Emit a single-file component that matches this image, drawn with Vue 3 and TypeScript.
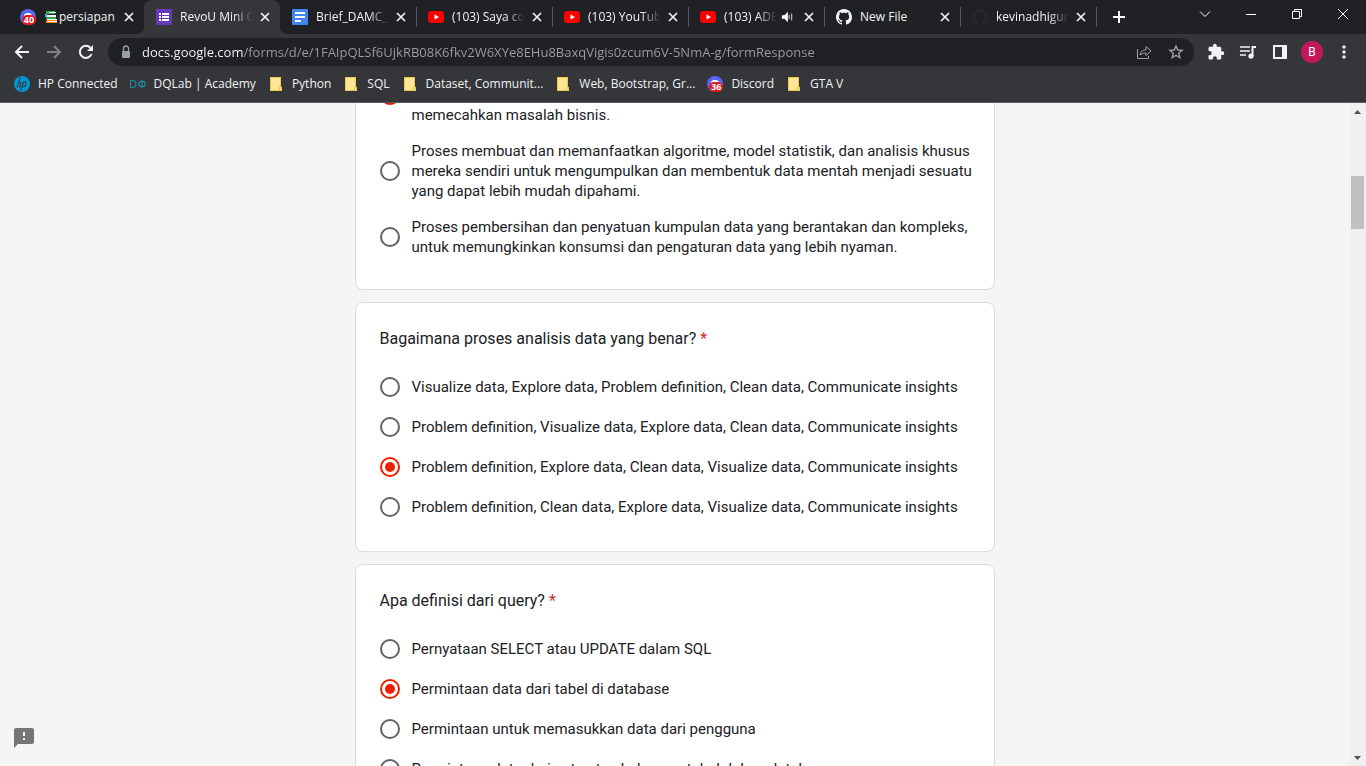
<script setup lang="ts">
import { ref } from 'vue'

type IconName = 'discord' | 'forms' | 'docs' | 'youtube' | 'github' | 'github-dark' | 'hp' | 'dqlab' | 'folder'

interface Tab { title: string; icon: IconName; active?: boolean; books?: boolean; audio?: boolean; fade?: boolean }
interface Bookmark { title: string; icon: IconName }
interface Question { id: string; title: string; options: string[]; answer: number }

const tabs: Tab[] = [
  { title: 'persiapan', icon: 'discord', books: true },
  { title: 'RevoU Mini C', icon: 'forms', active: true, fade: true },
  { title: 'Brief_DAMC_E', icon: 'docs', fade: true },
  { title: '(103) Saya co', icon: 'youtube', fade: true },
  { title: '(103) YouTub', icon: 'youtube', fade: true },
  { title: '(103) ADE', icon: 'youtube', audio: true, fade: true },
  { title: 'New File', icon: 'github' },
  { title: 'kevinadhigun', icon: 'github-dark', fade: true },
]

const bookmarks: Bookmark[] = [
  { title: 'HP Connected', icon: 'hp' },
  { title: 'DQLab | Academy', icon: 'dqlab' },
  { title: 'Python', icon: 'folder' },
  { title: 'SQL', icon: 'folder' },
  { title: 'Dataset, Communit...', icon: 'folder' },
  { title: 'Web, Bootstrap, Gr...', icon: 'folder' },
  { title: 'Discord', icon: 'discord' },
  { title: 'GTA V', icon: 'folder' },
]

const questions = ref<Question[]>([
  {
    id: 'wrangling',
    title: '',
    options: [
      'memecahkan masalah bisnis.',
      'Proses membuat dan memanfaatkan algoritme, model statistik, dan analisis khusus mereka sendiri untuk mengumpulkan dan membentuk data mentah menjadi sesuatu yang dapat lebih mudah dipahami.',
      'Proses pembersihan dan penyatuan kumpulan data yang berantakan dan kompleks, untuk memungkinkan konsumsi dan pengaturan data yang lebih nyaman.',
    ],
    answer: 0,
  },
  {
    id: 'proses',
    title: 'Bagaimana proses analisis data yang benar?',
    options: [
      'Visualize data, Explore data, Problem definition, Clean data, Communicate insights',
      'Problem definition, Visualize data, Explore data, Clean data, Communicate insights',
      'Problem definition, Explore data, Clean data, Visualize data, Communicate insights',
      'Problem definition, Clean data, Explore data, Visualize data, Communicate insights',
    ],
    answer: 2,
  },
  {
    id: 'query',
    title: 'Apa definisi dari query?',
    options: [
      'Pernyataan SELECT atau UPDATE dalam SQL',
      'Permintaan data dari tabel di database',
      'Permintaan untuk memasukkan data dari pengguna',
      'Permintaan data dari satu atau beberapa tabel dalam database',
    ],
    answer: 1,
  },
])

const address = ref('docs.google.com/forms/d/e/1FAIpQLSf6UjkRB08K6fkv2W6XYe8EHu8BaxqVigis0zcum6V-5NmA-g/formResponse')
</script>

<template>
  <div class="browser">
    <svg class="sprite" width="0" height="0" aria-hidden="true">
      <symbol id="i-discord" viewBox="0 0 16 16">
        <circle cx="8" cy="8" r="8" fill="#5865f2" />
        <path d="M4 7q0-3 4-3t4 3z" fill="#fff" />
      </symbol>
      <symbol id="i-forms" viewBox="0 0 16 16">
        <rect width="16" height="16" rx="1" fill="#673ab7" />
        <path d="M3 4h2v2H3zm3 0h7v2H6zM3 7h2v2H3zm3 0h7v2H6zm-3 3h2v2H3zm3 0h7v2H6z" fill="#fff" />
      </symbol>
      <symbol id="i-docs" viewBox="0 0 16 16">
        <rect width="16" height="16" rx="1" fill="#4285f4" />
        <path d="M3 3h10v2H3zm0 4h10v2H3zm0 4h6v2H3z" fill="#fff" />
      </symbol>
      <symbol id="i-youtube" viewBox="0 0 16 16">
        <rect y="2" width="16" height="12" rx="3" fill="#f00" />
        <path d="M6.5 5.5v5L11 8z" fill="#fff" />
      </symbol>
      <symbol id="i-github" viewBox="0 0 16 16">
        <path fill="currentColor" d="M8 0C3.58 0 0 3.58 0 8c0 3.54 2.29 6.53 5.47 7.59.4.07.55-.17.55-.38 0-.19-.01-.82-.01-1.49-2.01.37-2.53-.49-2.69-.94-.09-.23-.48-.94-.82-1.13-.28-.15-.68-.52-.01-.53.63-.01 1.08.58 1.23.82.72 1.21 1.87.87 2.33.66.07-.52.28-.87.51-1.07-1.78-.2-3.64-.89-3.64-3.95 0-.87.31-1.59.82-2.15-.08-.2-.36-1.02.08-2.12 0 0 .67-.21 2.2.82.64-.18 1.32-.27 2-.27.68 0 1.36.09 2 .27 1.53-1.04 2.2-.82 2.2-.82.44 1.1.16 1.92.08 2.12.51.56.82 1.27.82 2.15 0 3.07-1.87 3.75-3.65 3.95.29.25.54.73.54 1.48 0 1.07-.01 1.93-.01 2.2 0 .21.15.46.55.38A8.013 8.013 0 0016 8c0-4.42-3.58-8-8-8z" />
      </symbol>
      <symbol id="i-hp" viewBox="0 0 16 16">
        <circle cx="8" cy="8" r="8" fill="#0096d6" />
        <path d="M6.3 1 3.2 11.500M4.700 6.700q2.500-.8 2 1l-1.100 3.800M9.600 5.500 6.700 15M9.400 6q3.200-.6 2.600 1.300l-.7 2.200q-.4 1.400-2.900 1.200" fill="none" stroke="#35363a" stroke-width="1.1" />
      </symbol>
      <symbol id="i-dqlab" viewBox="0 0 16 16">
        <path d="M.6 4.5h2q3.4 0 3.4 3.5t-3.4 3.5h-2z" fill="none" stroke="#1f8a9c" stroke-width="1.2" />
        <ellipse cx="12" cy="8" rx="3.2" ry="2.7" fill="none" stroke="#1f8a9c" stroke-width="1.2" />
        <path d="M12 3.5v9" stroke="#1f8a9c" stroke-width="1.2" />
      </symbol>
      <symbol id="i-folder" viewBox="0 0 16 16">
        <path d="M2 1h11v10h1v4H2z" fill="#ffe694" />
        <path d="M2.5 1.5h10v9.5h1v3.5h-11zM11.5 14v-3h1.500" fill="none" stroke="#f0c74a" stroke-width="1" />
      </symbol>
    </svg>

    <header class="chrome">
      <div class="tab-strip">
        <div v-for="tab in tabs" :key="tab.title" class="tab" :class="{ active: tab.active }">
          <span class="favicon">
            <svg width="16" height="16" :class="{ dark: tab.icon === 'github-dark' }" aria-hidden="true">
              <use :href="tab.icon === 'github-dark' ? '#i-github' : '#i-' + tab.icon" />
            </svg>
            <span v-if="tab.icon === 'discord'" class="count">40</span>
          </span>
          <button type="button" class="tab-title" :class="{ fade: tab.fade }">
            <svg v-if="tab.books" class="books" width="14" height="14" viewBox="0 0 14 14" aria-hidden="true">
              <path d="M2 1h9v3H2z" fill="#2fa84f" />
              <path d="M3 5h9v2H3z" fill="#f3f3f3" />
              <path d="M2 7h10v2H2z" fill="#2fa84f" />
              <path d="M1 4h2v3H1z" fill="#3fb0e8" />
              <path d="M3 9h10v1H3z" fill="#fff" />
              <path d="M2 10h11v3H2z" fill="#f58220" />
              <path d="M5 2h7v1H5zM4 11h9v1H4z" fill="#fff" />
            </svg>{{ tab.title }}
          </button>
          <svg v-if="tab.audio" class="speaker" width="12" height="12" viewBox="0 0 14 14" aria-label="Audio">
            <path d="M1 5h3l4-4v12L4 9H1z" fill="#fff" />
            <path d="M9.500 4.500v5M12.500 3v8" stroke="#fff" stroke-width="1" />
          </svg>
          <button type="button" class="close" aria-label="Close tab">
            <svg width="16" height="16" viewBox="0 0 16 16"><path d="m4 4 8 8m0-8-8 8" stroke="currentColor" stroke-width="1.700" /></svg>
          </button>
        </div>
        <button type="button" class="new-tab" aria-label="New tab">
          <svg width="16" height="16" viewBox="0 0 16 16"><path d="M8 2v12M2 8h12" stroke="#fff" stroke-width="2" /></svg>
        </button>
        <div class="window-controls">
          <button type="button" aria-label="Search tabs"><svg width="12" height="12" viewBox="0 0 12 12"><path d="m1 3.500 5 5 5-5" /></svg></button>
          <button type="button" aria-label="Minimize"><svg width="12" height="12" viewBox="0 0 12 12"><path d="M1 6.500h10" /></svg></button>
          <button type="button" aria-label="Restore"><svg width="12" height="12" viewBox="0 0 12 12"><path d="M1.500 3.500h7v7h-7zM3.500 3.500v-2h7v7h-2" /></svg></button>
          <button type="button" aria-label="Close"><svg width="12" height="12" viewBox="0 0 12 12"><path d="m1 1 10 10M11 1 1 11" /></svg></button>
        </div>
      </div>

      <div class="toolbar">
        <button type="button" class="tool" aria-label="Back">
          <svg width="20" height="20" viewBox="0 0 20 20"><path d="M17 10H4m6-6-6 6 6 6" fill="none" stroke="currentColor" stroke-width="2" /></svg>
        </button>
        <button type="button" class="tool disabled" aria-label="Forward">
          <svg width="20" height="20" viewBox="0 0 20 20"><path d="M3 10h13m-6-6 6 6-6 6" fill="none" stroke="currentColor" stroke-width="2" /></svg>
        </button>
        <button type="button" class="tool" aria-label="Reload">
          <svg width="20" height="20" viewBox="0 0 20 20"><path d="M15.500 12a6 6 0 1 1-1.200-6.200" fill="none" stroke="currentColor" stroke-width="2" /><path d="M17 3v6h-6z" fill="currentColor" /></svg>
        </button>
        <div class="omnibox">
          <button type="button" class="mini" aria-label="Site information">
            <svg width="16" height="16" viewBox="0 0 16 16"><rect x="4" y="7" width="8" height="7" rx="1" fill="#9aa0a6" /><path d="M5.500 7V4.500a2.500 2.500 0 0 1 5 0V7" fill="none" stroke="#9aa0a6" stroke-width="1.300" /></svg>
          </button>
          <input v-model="address" class="address" type="text" aria-label="Address" spellcheck="false" />
          <button type="button" class="mini" aria-label="Share">
            <svg width="16" height="16" viewBox="0 0 16 16"><path d="M1.500 5v9.500h11V12" /><path d="M4 11q.5-5 6-5V2.500l5 4.500-5 4.500V9Q6 9 4 11z" /></svg>
          </button>
          <button type="button" class="mini" aria-label="Bookmark this page">
            <svg width="16" height="16" viewBox="0 0 16 16"><path stroke-width="1.400" d="m8 2 1.800 4 4.300.400-3.300 2.900 1 4.300L8 11.300l-3.800 2.300 1-4.300L1.900 6.400 6.200 6z" /></svg>
          </button>
        </div>
        <button type="button" class="tool" aria-label="Extensions">
          <svg width="18" height="18" viewBox="0 0 24 24"><path fill="currentColor" d="M20.500 11H19V7c0-1.100-.9-2-2-2h-4V3.500a2.500 2.500 0 0 0-5 0V5H4c-1.100 0-2 .9-2 2v3.800h1.500a2.700 2.700 0 0 1 0 5.400H2V20c0 1.100.9 2 2 2h3.800v-1.500a2.700 2.700 0 0 1 5.400 0V22H17c1.100 0 2-.9 2-2v-4h1.500a2.500 2.500 0 0 0 0-5z" /></svg>
        </button>
        <button type="button" class="tool" aria-label="Media controls">
          <svg width="18" height="18" viewBox="0 0 18 18"><path d="M1 4h10M1 8h10M1 12h6" stroke="currentColor" stroke-width="1.600" /><path d="M13.500 13V4H17" fill="none" stroke="currentColor" stroke-width="2" /><circle cx="12" cy="13" r="2.600" fill="currentColor" /></svg>
        </button>
        <button type="button" class="tool" aria-label="Side panel">
          <svg width="14" height="14" viewBox="0 0 14 14"><path fill="currentColor" fill-rule="evenodd" d="M0 0h14v14H0zM2 2v10h7V2z" /></svg>
        </button>
        <button type="button" class="tool" aria-label="Profile"><span class="avatar">B</span></button>
        <button type="button" class="tool" aria-label="Menu">
          <svg width="16" height="16" viewBox="0 0 16 16" fill="currentColor"><circle cx="8" cy="3" r="1.700" /><circle cx="8" cy="8" r="1.700" /><circle cx="8" cy="13" r="1.700" /></svg>
        </button>
      </div>

      <nav class="bookmarks" aria-label="Bookmarks">
        <a v-for="mark in bookmarks" :key="mark.title" href="#">
          <span class="favicon">
            <svg width="16" height="16" aria-hidden="true"><use :href="'#i-' + mark.icon" /></svg>
            <span v-if="mark.icon === 'discord'" class="count">36</span>
          </span>
          <span>{{ mark.title }}</span>
        </a>
      </nav>
    </header>

    <div class="viewport">
      <main class="page">
        <form class="form" @submit.prevent>
          <section v-for="(q, qi) in questions" :key="q.id" class="card" :class="{ first: qi === 0 }">
            <h2 v-if="q.title" :id="q.id">{{ q.title }} <span class="required">*</span></h2>
            <div class="options" role="radiogroup" :aria-labelledby="q.title ? q.id : undefined">
              <div v-for="(option, i) in q.options" :key="i" class="option">
                <input :id="q.id + i" v-model="q.answer" type="radio" :name="q.id" :value="i" />
                <label :for="q.id + i">{{ option }}</label>
              </div>
            </div>
          </section>
        </form>
        <button type="button" class="report" aria-label="Report a problem">
          <svg width="24" height="24" viewBox="0 0 24 24"><path fill="#757575" d="M20 2H4c-1.100 0-2 .9-2 2v18l4-4h14c1.100 0 2-.9 2-2V4c0-1.100-.9-2-2-2zm-7 12h-2v-2h2v2zm0-4h-2V6h2v4z" /></svg>
        </button>
      </main>
      <div class="scrollbar" aria-hidden="true">
        <span class="arrow"><svg width="7" height="4" viewBox="0 0 7 4"><path d="M0 4h7L3.500 0z" fill="#505050" /></svg></span>
        <span class="track"><span class="thumb"></span></span>
        <span class="arrow"><svg width="7" height="4" viewBox="0 0 7 4"><path d="M0 0h7L3.500 4z" fill="#505050" /></svg></span>
      </div>
    </div>
  </div>
</template>

<style>
body { overflow: hidden; }
</style>

<style scoped>
.browser {
  display: flex;
  flex-direction: column;
  height: 100vh;
  overflow: hidden;
  font-family: "Open Sans", "Noto Sans", sans-serif;
}
.browser * { box-sizing: border-box; }
.sprite { position: absolute; }
button {
  padding: 0;
  border: 0;
  background: none;
  color: inherit;
  font: inherit;
}
svg { display: block; flex: none; }

.chrome {
  flex: none;
  border-bottom: 1px solid #5b5c60;
  background: #35363a;
  color: #f1f3f4;
  font-size: 12px;
}
.tab-strip {
  display: flex;
  height: 34px;
  padding-left: 8px;
  background: #202124;
}
.tab {
  position: relative;
  display: flex;
  align-items: center;
  flex: 0 1 136px;
  min-width: 0;
  padding: 0 7px 0 12px;
}
.tab:nth-child(n + 3)::after {
  content: "";
  position: absolute;
  right: -1px;
  top: 7px;
  width: 1px;
  height: 20px;
  background: #55565a;
}
.tab.active { background: #35363a; border-radius: 8px 8px 0 0; }
.tab.active::before,
.tab.active::after {
  content: "";
  position: absolute;
  bottom: 0;
  width: 8px;
  height: 8px;
}
.tab.active::before { left: -8px; background: radial-gradient(circle at 0 0, #202124 8px, #35363a 8px); }
.tab.active::after { right: -8px; background: radial-gradient(circle at 100% 0, #202124 8px, #35363a 8px); }
.favicon { position: relative; flex: none; width: 16px; height: 16px; }
.dark { color: #24292f; }
.count {
  position: absolute;
  right: 0;
  bottom: 0;
  width: 14px;
  border-radius: 5px;
  background: #e01b24;
  color: #fff;
  font-size: 9px;
  font-weight: 700;
  line-height: 10px;
  text-align: center;
}
.tab-title {
  display: flex;
  align-items: center;
  flex: 1;
  min-width: 0;
  margin-left: 8px;
  line-height: 16px;
  white-space: nowrap;
}
.fade {
  -webkit-mask-image: linear-gradient(to left, transparent 4px, #000 24px);
  mask-image: linear-gradient(to left, transparent 4px, #000 24px);
}
.books { margin-right: 1px; }
.speaker { margin-right: 8px; }
.close { flex: none; width: 16px; height: 16px; }
.new-tab { display: grid; place-items: center; width: 28px; margin-left: 9px; }
.window-controls { display: flex; height: 28px; margin-left: auto; }
.window-controls button { display: grid; place-items: center; width: 46px; }
.window-controls path { fill: none; stroke: #fff; }

.toolbar {
  display: flex;
  align-items: center;
  gap: 4px;
  height: 36px;
  padding: 0 8px;
}
.tool { display: grid; place-items: center; flex: none; width: 28px; height: 28px; }
.tool.disabled { color: #818286; }
.omnibox {
  display: flex;
  align-items: center;
  gap: 16px;
  flex: 1;
  min-width: 0;
  height: 28px;
  margin: 0 4px;
  padding: 0 10px;
  border-radius: 14px;
  background: #202124;
}
.mini { flex: none; }
.mini:first-child { margin-right: -8px; }
.mini path { fill: none; stroke: #9aa0a6; }
.address {
  flex: 1;
  min-width: 0;
  height: 20px;
  padding: 0;
  border: 0;
  outline: 0;
  background: linear-gradient(to right, #fff 101px, #9aa0a6 101px);
  -webkit-background-clip: text;
  background-clip: text;
  color: transparent;
  font: 13px/20px "Open Sans", "Noto Sans", sans-serif;
}
.avatar {
  width: 22px;
  height: 22px;
  border-radius: 50%;
  background: #c2185b;
  color: #fff;
  font: 12px/22px Roboto, sans-serif;
  text-align: center;
}
.bookmarks {
  display: flex;
  align-items: center;
  gap: 12px;
  height: 32px;
  padding: 0 14px 4px;
}
.bookmarks a {
  display: flex;
  align-items: center;
  gap: 8px;
  color: inherit;
  line-height: 16px;
  text-decoration: none;
  white-space: nowrap;
}

.viewport { display: flex; flex: 1; min-height: 0; overflow: hidden; }
.page {
  position: relative;
  flex: 1;
  min-width: 0;
  overflow: hidden;
  background: #f6f5f5;
  color: #202124;
  font-family: Roboto, "Liberation Sans", sans-serif;
}
.form {
  display: flex;
  flex-direction: column;
  gap: 12px;
  max-width: 640px;
  margin: -38px auto 0;
}
.card {
  padding: 24px 16px 32px 24px;
  border: 1px solid #dadce0;
  border-radius: 8px;
  background: #fff;
}
.card.first { padding-top: 0; border-top: 0; border-radius: 0 0 8px 8px; }
h2 {
  margin: 0 0 24px;
  font-size: 16px;
  font-weight: 400;
  line-height: 24px;
}
.required { color: #d93025; }
.options { display: flex; flex-direction: column; gap: 16px; }
.option {
  display: flex;
  align-items: center;
  gap: 12px;
  min-height: 24px;
  font-size: 15px;
  line-height: 20px;
}
.first .option:first-child { height: 60px; }
.first .option:first-child label { align-self: flex-end; }
input[type="radio"] {
  appearance: none;
  display: grid;
  place-items: center;
  flex: none;
  width: 20px;
  height: 20px;
  margin: 0;
  border: 2px solid #5f6368;
  border-radius: 50%;
}
input[type="radio"]:checked { border-color: #eb1f00; }
input[type="radio"]:checked::before {
  content: "";
  width: 10px;
  height: 10px;
  border-radius: 50%;
  background: #eb1f00;
}
.report { position: absolute; left: 12px; bottom: 16px; }

.scrollbar {
  display: flex;
  flex-direction: column;
  flex: none;
  width: 17px;
  background: #f0f0f0;
}
.arrow { display: grid; place-items: center; height: 17px; }
.track { flex: 1; padding: 56px 2px 0; }
.thumb { display: block; height: 53px; background: #c1c1c1; }
</style>
